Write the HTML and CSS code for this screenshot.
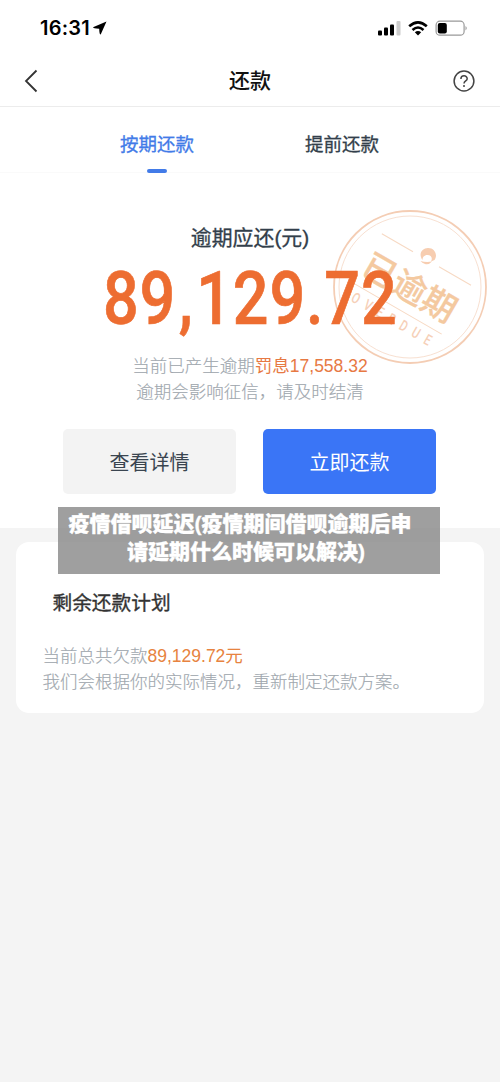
FILE: index.html
```html
<!DOCTYPE html>
<html lang="zh-CN">
<head>
<meta charset="utf-8">
<title>还款</title>
<link rel="stylesheet" href="styles.css">
</head>
<body>
<header class="top">
  <div class="status">
    <span class="time">16:31</span>
    <svg class="loc" width="14" height="14" viewBox="0 0 14 14"><path d="M13.500.5 0 6.200Q0 7.500 6.200 7.700Q6.300 13.600 7.700 13.600Z"/></svg>
    <svg class="signals" width="92" height="18" viewBox="0 0 92 18">
      <rect x="1" y="11.500" width="4" height="5" rx="1"/><rect x="7" y="8.500" width="4" height="8" rx="1"/><rect x="13" y="5.500" width="4" height="11" rx="1"/><rect x="19.500" y="2" width="4" height="14.500" rx="1" fill="#ccc"/>
      <g fill="none" stroke="#000" stroke-width="2.600"><path d="M32.200 7.300Q41 -.7 49.800 7.300"/><path d="M35.500 11Q41 6 46.500 11"/></g><path d="M37.800 13.300Q41 10.600 44.200 13.300L41 16.500Z"/>
      <rect x="59.100" y="2.200" width="28" height="14" rx="3.800" fill="none" stroke="#999" stroke-width="1.200"/><rect x="60.800" y="4" width="9" height="10.500" rx="2"/><path d="M88.500 7Q91 9.200 88.500 11.500Z" fill="#999"/>
    </svg>
  </div>
  <nav class="bar">
    <svg width="14" height="24" viewBox="0 0 14 24" fill="none" stroke="#333" stroke-width="1.800"><path d="M12.500 1.500 2 12 12.500 22.500"/></svg>
    <h1>还款</h1>
    <svg width="22" height="22" viewBox="0 0 22 22" fill="none" stroke="#444" stroke-width="1.500"><circle cx="11" cy="11" r="9.900"/><path d="M7.900 8.900C7.900 4.800 14.200 4.900 14.200 8.700C14.200 11 11 10.900 11 13.600"/><path d="M11 15v2"/></svg>
  </nav>
</header>
<div class="tabs"><span class="tab on">按期还款</span><span class="tab">提前还款</span></div>
<main class="due">
  <svg class="stamp" width="156" height="156" viewBox="-78 -78 156 156">
    <circle r="76" fill="none" stroke="#f4cdb4" stroke-width="1.800"/><circle r="71" fill="none" stroke="#f8e0d1" stroke-width="1"/>
    <g transform="rotate(30)">
      <path d="M-51-32H-15M15-32H52M-51 25H51" stroke="#f7d9c3" stroke-width="1"/>
      <text class="seal" x="0" y="13" text-anchor="middle">已逾期</text>
      <text class="overdue" transform="scale(.75 1)" x="-60" y="42" textLength="120">OVERDUE</text>
    </g>
    <path d="M12.500-27C8-33 12-39 18-39C25-39 28-32 24.500-27L21-25.500C23-29 21-32 17.500-32C14-32 12.500-29.500 12.500-27Z" fill="#f7cdb0"/>
    <path d="M10.500-26Q16-24.500 22-25.500Q19-22 15-23Q12-24 10.500-26Z" fill="#f7cdb0"/>
  </svg>
  <h2>逾期应还(元)</h2>
  <div class="amount"><span>89<i>,</i>129.72</span></div>
  <p class="note">当前已产生逾期<b>罚息17,558.32</b><br>逾期会影响征信，请及时结清</p>
  <div class="buttons"><button>查看详情</button><button class="primary">立即还款</button></div>
</main>
<section class="plan">
  <h3>剩余还款计划</h3>
  <p class="note">当前总共欠款<b>89,129.72元</b><br>我们会根据你的实际情况，重新制定还款方案。</p>
</section>
<div class="caption">疫情借呗延迟(疫情期间借呗逾期后申<br><span>请延期什么时候可以解决)</span></div>
</body>
</html>
```
FILE: styles.css
```css
* { box-sizing: border-box; }
body { margin: 0; width: 500px; height: 1082px; overflow: hidden; position: relative; background: #f4f4f4; font-family: "Liberation Sans", "Noto Sans CJK SC", sans-serif; }
h1, h2, h3, p { margin: 0; }
.top { height: 107px; background: #fff; border-bottom: 1px solid #ececec; }
.status { height: 56px; display: flex; align-items: center; padding: 0 31px 0 40px; }
.time { font: 600 20px/24px Inter, sans-serif; letter-spacing: .2px; }
.loc { margin-left: 3px; }
.signals { margin-left: auto; }
.bar { height: 49px; display: grid; grid-template-columns: 60px 1fr 60px; align-items: center; justify-items: center; }
.bar svg:first-child { justify-self: start; margin-left: 24px; }
.bar svg:last-child { justify-self: end; margin-right: 25px; }
.bar h1 { font-size: 21px; line-height: 30px; font-weight: 500; color: #111; }
.tabs { height: 66px; display: flex; justify-content: center; padding-right: 1px; background: #fff; border-bottom: 1px solid #fafafa; }
.tab { width: 185px; height: 66px; display: flex; flex-direction: column; align-items: center; padding-top: 24px; font-size: 18.500px; line-height: 28px; font-weight: 400; -webkit-text-stroke: .3px; color: #333f4b; }
.on { color: #427be8; }
.on::after { content: ""; width: 20px; height: 4px; border-radius: 2px; margin-top: 10px; background: #427be8; }
.due { height: 355px; position: relative; background: #fff; text-align: center; padding-top: 49px; }
.stamp { position: absolute; left: 332px; top: 36px; }
.seal { font-size: 34px; font-weight: 500; fill: #f4c9a0; stroke: #f4c9a0; stroke-width: .3px; }
.overdue { font: 500 15px Roboto, sans-serif; fill: #f6d0b8; }
.due h2 { font-size: 20.900px; line-height: 32px; font-weight: 400; -webkit-text-stroke: .3px; color: #333f4b; }
.amount { position: relative; height: 80px; margin-top: 5px; display: flex; justify-content: center; font: 500 74px/80px Roboto, sans-serif; color: #ed6d31; }
.amount span { transform: scaleX(.85); letter-spacing: 1px; -webkit-text-stroke: .7px; }
.amount i { font-style: normal; margin: 0 3px; }
.note { font-size: 17.500px; line-height: 26px; color: #a0a7ae; font-weight: 300; -webkit-text-stroke: .15px; }
.note b { font-weight: 400; color: #e77943; -webkit-text-stroke: 0; }
.due .note { position: relative; margin-top: 14px; }
.buttons { display: flex; justify-content: center; gap: 27px; margin-top: 24px; padding-right: 1px; }
button { width: 173px; height: 65px; padding: 0; border: 0; border-radius: 5px; background: #f3f3f3; color: #3a4550; font: 400 20px/30px "Noto Sans CJK SC", sans-serif; }
.primary { background: #3a75f6; color: #fff; }
.plan { margin: 14px 16px 0; height: 171px; border-radius: 13px; background: #fff; padding: 45px 0 0 26.500px; }
.plan h3 { margin-left: 10px; font-size: 19.700px; line-height: 32px; font-weight: 400; -webkit-text-stroke: .35px; color: #333; }
.plan .note { margin-top: 24px; }
.plan b { color: #e78340; }
.caption { position: absolute; left: 58px; top: 507px; width: 382px; height: 67px; padding: 3px 18px 0 0; background: rgba(140,140,140,.83); color: #fff; text-align: center; font-size: 21px; line-height: 28px; font-weight: 900; -webkit-text-stroke: .3px; white-space: nowrap; }
.caption span { padding-left: 12px; }
```
